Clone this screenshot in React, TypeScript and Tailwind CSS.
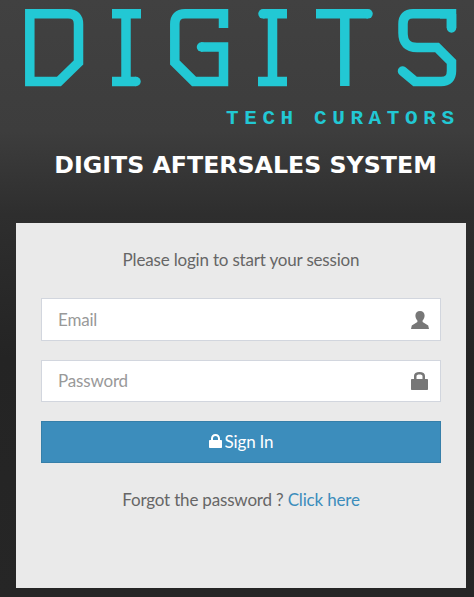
const font = "font-['Lato','Noto_Sans',sans-serif]";

// DIGITS wordmark, drawn as strokes
function Logo() {
  return (
    <svg width="474" height="100" viewBox="0 0 474 100" fill="none" stroke="#22c8d4" strokeWidth="9.5" aria-label="DIGITS" className="block shrink-0">
      <path d="M29.8 13.8H68Q78.5 13.8 78.5 24V62.5L59 81.5H29.8Z" />
      <path d="M112 13.8H141M126 13.8V81.5M112 81.5H136" />
      <circle cx="136" cy="81.5" r="4.75" fill="#22c8d4" stroke="none" />
      <path d="M223.5 28V13.8H185Q174.8 13.8 174.8 24V62.5L194 81.5H223.5V47H201" />
      <circle cx="201.5" cy="47" r="4.75" fill="#22c8d4" stroke="none" />
      <path d="M263 13.8H287M272.5 13.8V81.5M258 81.5H287" />
      <circle cx="263" cy="13.8" r="4.75" fill="#22c8d4" stroke="none" />
      <path d="M316 13.8H368M344.8 13.8V86" />
      <circle cx="368" cy="13.8" r="4.75" fill="#22c8d4" stroke="none" />
      <path d="M451.5 28V13.8H413Q403 13.8 403 24V33Q403 47.5 417 47.5H437L451.5 62V71Q451.5 81.5 441 81.5H415L402.5 71" strokeLinecap="round" />
      <path d="M440 13.8H456M451.5 14V28" />
    </svg>
  );
}

function UserGlyph() {
  return (
    <svg width="18" height="18" viewBox="0 0 18 18" fill="#777777" className="block">
      <path d="M9 0C6.2 0 4.4 1.8 4.4 4.6 4.4 6.6 5.2 8.4 6.4 9.4V11L0.8 14.6 0 18H18L17.2 14.6 11.6 11V9.4C12.8 8.4 13.6 6.6 13.6 4.6 13.6 1.8 11.8 0 9 0Z" />
    </svg>
  );
}

function LockGlyph() {
  return (
    <svg width="17" height="18" viewBox="0 0 17 18" fill="#777777" className="block">
      <path fillRule="evenodd" d="M3 7V4C3 1.4 5 0 8.5 0S14 1.4 14 4V7H16C16.6 7 17 7.4 17 8V17C17 17.6 16.6 18 16 18H1C0.4 18 0 17.6 0 17V8C0 7.4 0.4 7 1 7ZM5.5 7H11.5V4C11.5 2.9 10.4 2.4 8.5 2.4S5.5 2.9 5.5 4Z" />
    </svg>
  );
}

function ButtonLock() {
  return (
    <svg width="13" height="14" viewBox="0 0 13 14" fill="#ffffff" className="mb-[2px] block">
      <path fillRule="evenodd" d="M2 6V4.5C2 1.8 3.8 0 6.5 0S11 1.8 11 4.5V6H12.2C12.7 6 13 6.3 13 6.8V13.2C13 13.7 12.7 14 12.2 14H0.8C0.3 14 0 13.7 0 13.2V6.8C0 6.3 0.3 6 0.8 6ZM4 6H9V4.5C9 3 8 2 6.5 2S4 3 4 4.5Z" />
    </svg>
  );
}

export default function App() {
  return (
    <div className={`${font} h-[597px] w-[474px] overflow-hidden bg-[linear-gradient(180deg,#414141_0%,#3d3d3d_22%,#2e2e2e_36%,#242424_60%,#262626_100%)] flex flex-col`}>
      <Logo />
      <div className="mt-[1px] h-[36px] pl-[226px] font-['Liberation_Mono',monospace] font-bold text-[#22c8d4] text-[21px] leading-[36px] tracking-[5.6px] [word-spacing:-3px] whitespace-nowrap">
        TECH CURATORS
      </div>
      <h1 className="mt-[3px] h-[50px] pl-[17px] text-center font-['DejaVu_Sans',sans-serif] font-bold text-white text-[23.7px] leading-[50px] whitespace-nowrap">
        DIGITS AFTERSALES SYSTEM
      </h1>

      <div className="ml-[16px] mt-[33px] h-[365px] w-[450px] bg-[#eaeaea] px-[25px] pt-[25px] text-[17px] tracking-[-0.18px]">
        <p className="text-center text-[#666666] leading-[24px]">Please login to start your session</p>

        <div className="mt-[26px] flex h-[43px] items-center justify-between border border-[#d2d6de] bg-white pl-[16px] pr-[11px]">
          <span className="text-[#999999]">Email</span>
          <UserGlyph />
        </div>
        <div className="mt-[19px] flex h-[42px] items-center justify-between border border-[#d2d6de] bg-white pl-[16px] pr-[12px]">
          <span className="text-[#999999]">Password</span>
          <LockGlyph />
        </div>

        <button className="mt-[19px] flex h-[42px] w-full items-center justify-center gap-[3px] border border-[#367fa9] bg-[#3c8dbc] text-white">
          <ButtonLock />
          Sign In
        </button>

        <p className="mt-[25px] text-center text-[#666666] leading-[24px]">
          Forgot the password ? <a className="text-[#3c8dbc]">Click here</a>
        </p>
      </div>
    </div>
  );
}
